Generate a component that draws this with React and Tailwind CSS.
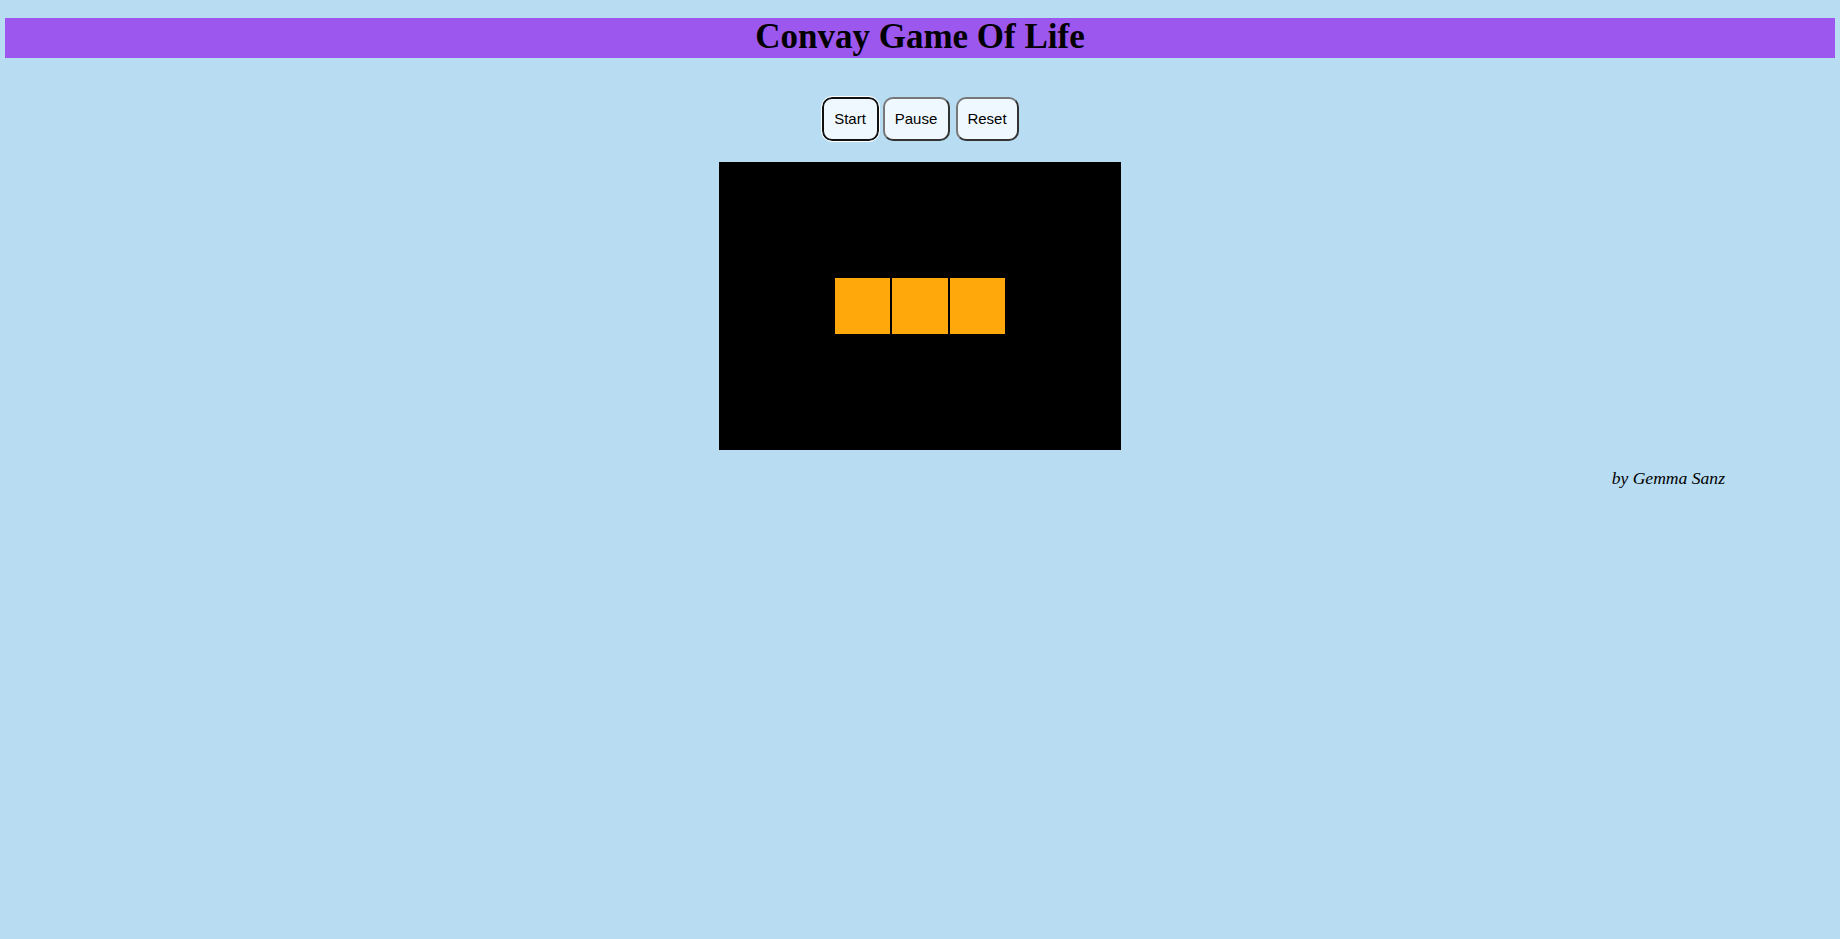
import React from "react";

const ROWS = 5;
const COLS = 7;
const alive = new Set(["2-2", "2-3", "2-4"]);

export default function App() {
  const cells = [];
  for (let r = 0; r < ROWS; r++) {
    for (let c = 0; c < COLS; c++) {
      const on = alive.has(`${r}-${c}`);
      cells.push(
        <div
          key={`${r}-${c}`}
          className={on ? "border border-black bg-[#ffa80c]" : "border border-black bg-black"}
        />
      );
    }
  }

  return (
    <div className="min-h-[939px] bg-[#b8dcf1] pt-[18px] font-['Liberation_Serif',serif] text-black">
      <h1 className="mx-[5px] h-[40px] bg-[#9c57ef] text-center text-[35px] font-bold leading-[37px]">
        Convay Game Of Life
      </h1>

      <div className="mt-[39px] flex justify-center font-['Liberation_Sans',Arial,sans-serif] text-[15px] leading-[1.15]">
        <button className="h-[44px] w-[57px] rounded-[10px] border-2 border-[#111] bg-[#f0f8ff] outline outline-1 outline-white">
          Start
        </button>
        <button className="ml-[4px] h-[44px] w-[67px] rounded-[10px] border-2 border-t-[#777] border-l-[#777] border-b-[#333] border-r-[#333] bg-[#f0f8ff]">
          Pause
        </button>
        <button className="ml-[6px] h-[44px] w-[63px] rounded-[10px] border-2 border-t-[#777] border-l-[#777] border-b-[#333] border-r-[#333] bg-[#f0f8ff]">
          Reset
        </button>
      </div>

      <div className="mt-[21px] flex justify-center">
        <div className="grid h-[288px] w-[402px] grid-cols-7 grid-rows-5 bg-black">
          {cells}
        </div>
      </div>

      <p className="mt-[18px] pr-[115px] text-right text-[17.6px] italic leading-[1.15]">by Gemma Sanz</p>
    </div>
  );
}
